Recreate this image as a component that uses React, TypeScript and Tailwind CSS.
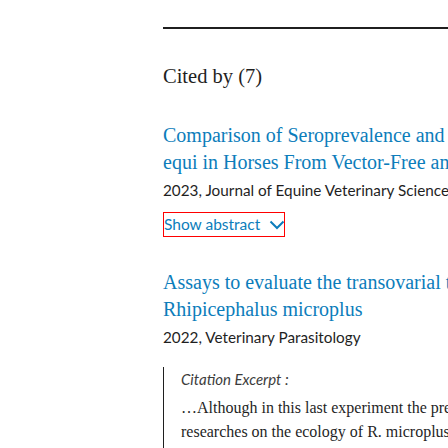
const serif = "font-['Liberation_Serif',serif]";
const sans = "font-['Lato',sans-serif]";

const citations = [
  {
    title: [
      "Comparison of Seroprevalence and Risk Factors of Theileria",
      "equi in Horses From Vector-Free and Endemic Areas",
    ],
    meta: "2023, Journal of Equine Veterinary Science",
    abstract: true,
  },
  {
    title: [
      "Assays to evaluate the transovarial transmission of Babesia in",
      "Rhipicephalus microplus",
    ],
    meta: "2022, Veterinary Parasitology",
    excerpt: [
      "…Although in this last experiment the prevalence was low, the",
      "researches on the ecology of R. microplus in subtropical regions",
      "and temperate areas (Nava et al., 2020). The tick infestation",
    ],
  },
];

function Chevron() {
  return (
    <svg width="16" height="10" viewBox="0 0 16 10" fill="none" className="ml-[9px] shrink-0">
      <path d="M1.5 1.5 L8 8 L14.5 1.5" stroke="#0c7dbb" strokeWidth="2" />
    </svg>
  );
}

export default function App() {
  return (
    <div className="w-[448px] h-[448px] overflow-hidden bg-white">
      <div className="w-[800px] pl-[163px] pt-[27px]">
        <div className="h-[2px] bg-[#1f1f1f]" />
        <h2 className={`${serif} mt-[34px] text-[20.5px] leading-[26px] text-[#1f1f1f]`}>Cited by (7)</h2>
        <ul>
          {citations.map((c, i) => (
            <li key={i} className={i === 0 ? "mt-[33px]" : "mt-[32px]"}>
              <a className={`${serif} block text-[20px] leading-[26.5px] text-[#0c7dbb]`}>
                {c.title.map((line) => (
                  <span key={line} className="block whitespace-nowrap">{line}</span>
                ))}
              </a>
              <div className={`${sans} mt-[5px] text-[15.3px] leading-[20px] text-[#1f1f1f] whitespace-nowrap`}>{c.meta}</div>
              {c.abstract && (
                <button className={`${sans} mt-[12px] flex items-center h-[25px] w-[122px] border border-[#ff0000] text-[15.5px] text-[#0c7dbb] whitespace-nowrap`}>
                  Show abstract
                  <Chevron />
                </button>
              )}
              {c.excerpt && (
                <blockquote className="mt-[20px] border-l border-[#1f1f1f] pl-[17px] pt-[2px]">
                  <div className={`${sans} italic text-[15px] leading-[20px] text-[#3c3c3c]`}>Citation Excerpt :</div>
                  <div className={`${serif} mt-[7px] text-[16px] leading-[23.5px] text-[#1f1f1f]`}>
                    {c.excerpt.map((line) => (
                      <span key={line} className="block whitespace-nowrap">{line}</span>
                    ))}
                  </div>
                </blockquote>
              )}
            </li>
          ))}
        </ul>
      </div>
    </div>
  );
}
